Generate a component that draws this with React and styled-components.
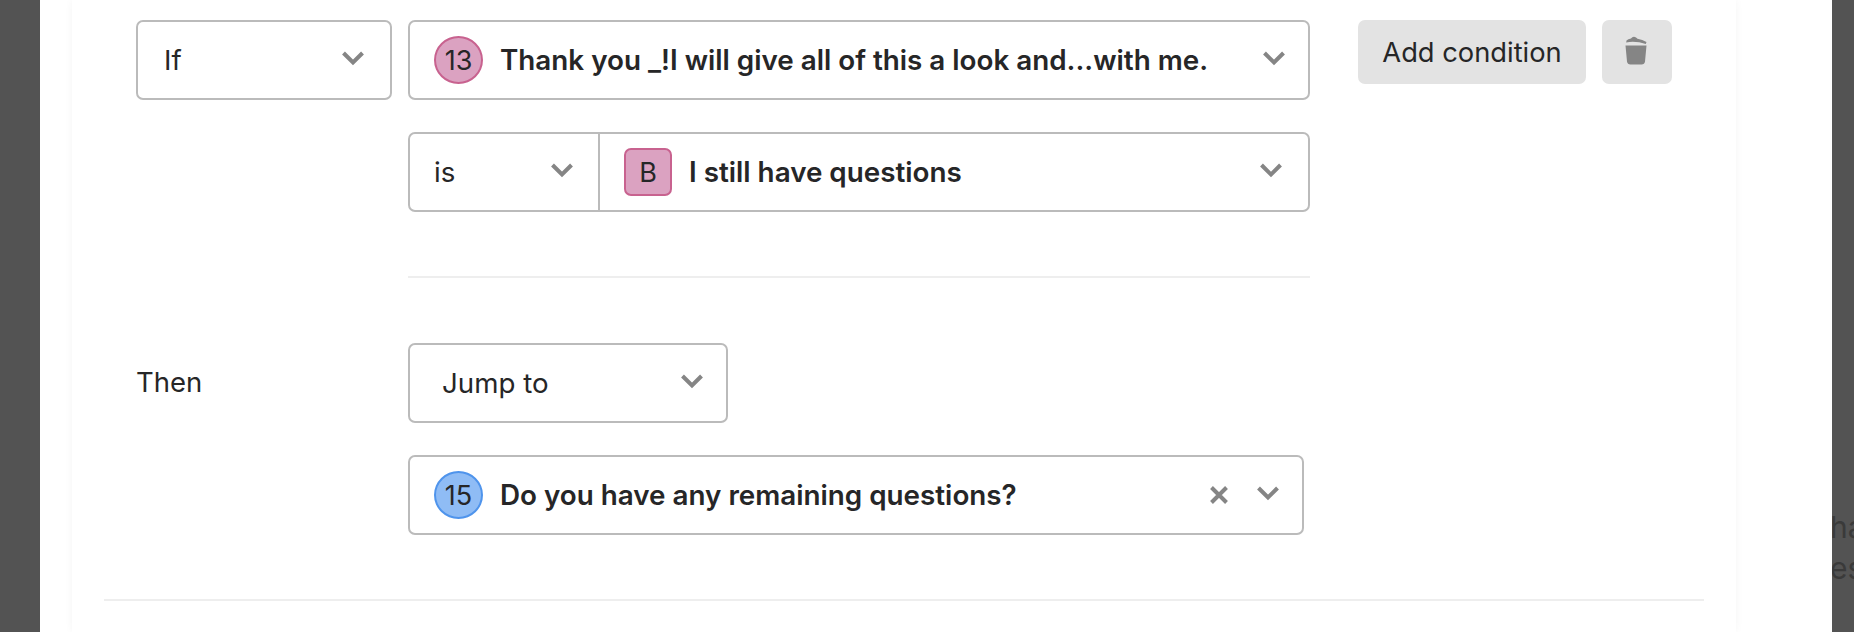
import React from "react";
import styled, { createGlobalStyle } from "styled-components";

const Global = createGlobalStyle`
  html, body { margin: 0; padding: 0; height: 100%; overflow: hidden; background: #535353; }
  #root { height: 632px; }
`;

const Page = styled.div`
  display: flex;
  width: 1854px;
  height: 632px;
  overflow: hidden;
  background: #535353;
  font-family: Inter, "Liberation Sans", sans-serif;
  color: #262627;
`;

const Gutter = styled.div`
  flex: 0 0 ${(p) => p.$w}px;
  overflow: hidden;
`;

const BackdropText = styled.div`
  width: 60px;
  margin: 507px 0 0 -2px;
  font-size: 30px;
  line-height: 41px;
  color: #3a3a3a;
`;

const Modal = styled.div`
  flex: 1;
  background: #fff;
  padding: 0 96px 0 32px;
`;

const Card = styled.div`
  height: 632px;
  box-sizing: border-box;
  background: #fff;
  box-shadow: 0 0 8px rgba(0, 0, 0, 0.045);
  padding: 20px 32px 0 32px;
`;

const Rule = styled.div`
  height: 2px;
  background: #eeeeee;
  margin: ${(p) => p.$m};
`;

const Row = styled.div`
  display: flex;
  margin-left: 32px;
  margin-bottom: ${(p) => p.$mb || 0}px;
`;

const LabelCell = styled.div`
  flex: 0 0 272px;
  display: flex;
  align-items: ${(p) => (p.$center ? "center" : "flex-start")};
  font-size: 27.5px;
  padding-bottom: ${(p) => (p.$center ? 2 : 0)}px;
`;

const Box = styled.div`
  box-sizing: border-box;
  width: ${(p) => p.$w}px;
  height: 80px;
  display: flex;
  align-items: center;
  border: 2px solid #bbbbbb;
  border-radius: 7px;
  background: #fff;
`;

const Field = styled.div`
  display: flex;
  align-items: center;
  flex: ${(p) => (p.$w ? `0 0 ${p.$w}px` : "1")};
  height: 100%;
  box-sizing: border-box;
  padding: ${(p) => p.$pad || "0 26px 0 26px"};
  border-right: ${(p) => (p.$split ? "2px solid #bbbbbb" : "none")};
`;

const Plain = styled.span`
  flex: 1;
  font-size: 27.7px;
`;

const Bold = styled.span`
  flex: 1;
  font-size: 27.8px;
  font-weight: 600;
  white-space: nowrap;
`;

const Badge = styled.span`
  flex: none;
  box-sizing: border-box;
  width: ${(p) => (p.$square ? 48 : 49)}px;
  height: 48px;
  margin-right: 17px;
  display: flex;
  align-items: center;
  justify-content: center;
  font-size: 27px;
  border: 2px solid ${(p) => p.$edge};
  border-radius: ${(p) => (p.$square ? "7px" : "50%")};
  background: ${(p) => p.$fill};
`;

const Actions = styled.div`
  display: flex;
  gap: 16px;
  margin-left: 48px;
`;

const Button = styled.button`
  height: 64px;
  width: ${(p) => p.$w}px;
  padding: 0;
  border: 0;
  border-radius: 7px;
  background: #e3e3e3;
  color: #262627;
  font: 400 27.3px Inter, "Liberation Sans", sans-serif;
  display: flex;
  align-items: center;
  justify-content: center;
`;

const Chevron = () => (
  <svg width="24" height="16" viewBox="0 0 24 16" style={{ flex: "none", marginTop: -4 }}>
    <path d="M2.5 3 L12 12.5 L21.5 3" fill="none" stroke="#858585" strokeWidth="4" />
  </svg>
);

const Cross = () => (
  <svg width="20" height="20" viewBox="0 0 20 20" style={{ flex: "none", marginRight: 27 }}>
    <path d="M2.5 2.5 L17.5 17.5 M17.5 2.5 L2.5 17.5" fill="none" stroke="#858585" strokeWidth="4" />
  </svg>
);

const Trash = () => (
  <svg width="22" height="29" viewBox="0 0 22 29" style={{ marginLeft: -2, marginTop: -3 }}>
    <path d="M0.5 9.5 H21.5 L20 25.5 Q19.6 28.5 16.5 28.5 H5.5 Q2.4 28.5 2 25.5 Z" fill="#858585" />
    <path d="M1.5 4.5 Q3 2.8 6 2.4 Q7.5 0.4 10 1 Q11.5 1.4 12.5 2.8 Q17.5 3.6 21.5 6 L20.8 8 Q11 4.8 1.2 6.4 Z" fill="#858585" />
  </svg>
);

export default function App() {
  return (
    <Page>
      <Global />
      <Gutter $w={40} />
      <Modal>
        <Card>
          <Row $mb={32}>
            <LabelCell>
              <Box $w={256}>
                <Field $pad="0 25px 0 26px">
                  <Plain>If</Plain>
                  <Chevron />
                </Field>
              </Box>
            </LabelCell>
            <Box $w={902}>
              <Field $pad="0 22px 0 24px">
                <Badge $fill="#dba2c1" $edge="#c8628f">13</Badge>
                <Bold>Thank you _!I will give all of this a look and...with me.</Bold>
                <Chevron />
              </Field>
            </Box>
            <Actions>
              <Button $w={228}>Add condition</Button>
              <Button $w={70} aria-label="Delete"><Trash /></Button>
            </Actions>
          </Row>
          <Row>
            <LabelCell />
            <Box $w={902}>
              <Field $w={190} $split $pad="0 24px 0 24px">
                <Plain>is</Plain>
                <Chevron />
              </Field>
              <Field $pad="0 25px 0 24px">
                <Badge $square $fill="#dba2c1" $edge="#c8628f">B</Badge>
                <Bold>I still have questions</Bold>
                <Chevron />
              </Field>
            </Box>
          </Row>
          <Rule $m="64px 0 65px 304px" style={{ width: 902 }} />
          <Row $mb={32}>
            <LabelCell $center>Then</LabelCell>
            <Box $w={320}>
              <Field $pad="0 22px 0 32px">
                <Plain>Jump to</Plain>
                <Chevron />
              </Field>
            </Box>
          </Row>
          <Row>
            <LabelCell />
            <Box $w={896}>
              <Field $pad="0 22px 0 24px">
                <Badge $fill="#8fbcf5" $edge="#4f94ec">15</Badge>
                <Bold>Do you have any remaining questions?</Bold>
                <Cross />
                <Chevron />
              </Field>
            </Box>
          </Row>
          <Rule $m="64px 0 0 0" />
        </Card>
      </Modal>
      <Gutter $w={22}>
        <BackdropText>
          ha
          <br />
          es
        </BackdropText>
      </Gutter>
    </Page>
  );
}
